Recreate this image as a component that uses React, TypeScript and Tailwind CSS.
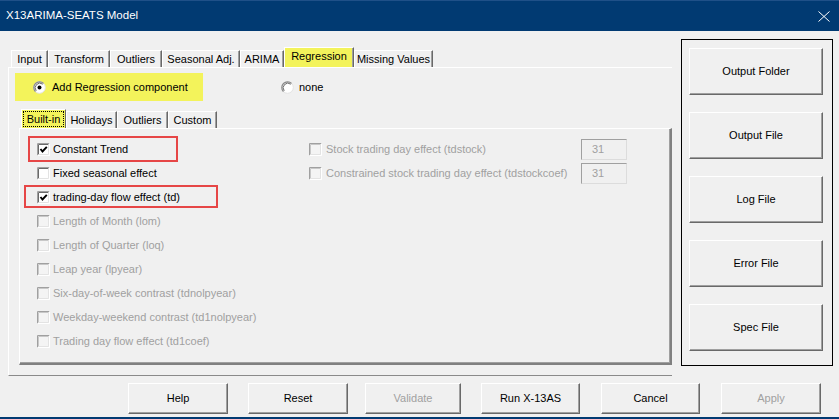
import React from 'react';

const font = { fontFamily: '"Liberation Sans", Arial, sans-serif' };

const outerTabs = [
  { label: 'Input', w: 'w-[37px]' },
  { label: 'Transform', w: 'w-[62px]' },
  { label: 'Outliers', w: 'w-[52px]' },
  { label: 'Seasonal Adj.', w: 'w-[78px]' },
  { label: 'ARIMA', w: 'w-[44px]' },
  { label: 'Regression', w: 'w-[70px]', active: true },
  { label: 'Missing Values', w: 'w-[79px]' },
];

const innerTabs = [
  { label: 'Built-in', w: 'w-[45px]', active: true },
  { label: 'Holidays', w: 'w-[51px]' },
  { label: 'Outliers', w: 'w-[51px]' },
  { label: 'Custom', w: 'w-[49px]' },
];

const leftChecks = [
  { label: 'Constant Trend', checked: true },
  { label: 'Fixed seasonal effect' },
  { label: 'trading-day flow effect (td)', checked: true },
  { label: 'Length of Month (lom)', disabled: true },
  { label: 'Length of Quarter (loq)', disabled: true },
  { label: 'Leap year (lpyear)', disabled: true },
  { label: 'Six-day-of-week contrast (tdnolpyear)', disabled: true },
  { label: 'Weekday-weekend contrast (td1nolpyear)', disabled: true },
  { label: 'Trading day flow effect (td1coef)', disabled: true },
];

const rightChecks = [
  'Stock trading day effect (tdstock)',
  'Constrained stock trading day effect (tdstockcoef)',
];

const sideButtons = ['Output Folder', 'Output File', 'Log File', 'Error File', 'Spec File'];

// bottom row: label, width, left margin, disabled
const bottomButtons = [
  { label: 'Help', w: 'w-[100px]', ml: 'ml-[128px]' },
  { label: 'Reset', w: 'w-[100px]', ml: 'ml-[20px]' },
  { label: 'Validate', w: 'w-[96px]', ml: 'ml-[17px]', disabled: true },
  { label: 'Run X-13AS', w: 'w-[99px]', ml: 'ml-[20px]' },
  { label: 'Cancel', w: 'w-[99px]', ml: 'ml-[21px]' },
  { label: 'Apply', w: 'w-[100px]', ml: 'ml-[21px]', disabled: true },
];

function CheckBox({ checked, disabled }: { checked?: boolean; disabled?: boolean }) {
  return (
    <svg width="13" height="13" viewBox="0 0 13 13" className="shrink-0">
      <rect x="0" y="0" width="13" height="13" fill={disabled ? '#f4f4f4' : '#ffffff'} />
      <path d="M0.5 12.5V0.5H12.5" fill="none" stroke="#a0a0a0" />
      <path d="M1.5 11.5V1.5H11.5" fill="none" stroke={disabled ? '#c8c8c8' : '#696969'} />
      <path d="M0.5 12.5H12.5V0.5" fill="none" stroke="#ffffff" />
      <path d="M1.5 11.5H11.5V1.5" fill="none" stroke="#e3e3e3" />
      {checked && (
        <polyline points="3.5,6 5.5,8.5 9.8,3.8" fill="none" stroke="#000" strokeWidth="1.9" />
      )}
    </svg>
  );
}

function Radio({ checked }: { checked?: boolean }) {
  return (
    <svg width="13" height="13" viewBox="0 0 13 13" className="shrink-0">
      <circle cx="6.5" cy="6.5" r="5.8" fill="#ffffff" stroke="#e3e3e3" />
      <path d="M2.4 10.6A5.8 5.8 0 0 1 10.6 2.4" fill="none" stroke="#8a8a8a" strokeWidth="1.2" />
      <path d="M3.2 9.8A4.7 4.7 0 0 1 9.8 3.2" fill="none" stroke="#5a5a5a" strokeWidth="0.9" />
      {checked && <circle cx="6.5" cy="6.5" r="2" fill="#000" />}
    </svg>
  );
}

function Button3D({ label, className, disabled }: { label: string; className: string; disabled?: boolean }) {
  return (
    <div
      className={`${className} flex items-center justify-center bg-[#f0f0f0] border border-t-white border-l-white border-r-[#696969] border-b-[#696969] shadow-[inset_-1px_-1px_0_#a0a0a0] text-[11px] ${
        disabled ? 'text-[#a0a0a0]' : 'text-black'
      }`}
    >
      {label}
    </div>
  );
}

export default function App() {
  return (
    <div className="w-[839px] h-[419px] bg-[#f0f0f0] flex flex-col overflow-hidden select-none" style={font}>
      {/* Title bar */}
      <div className="h-[31px] shrink-0 bg-[#013a72] border-t border-t-[#1f5088] flex items-center justify-between pl-[6px] pr-[9px]">
        <span className="text-white text-[11.5px]">X13ARIMA-SEATS Model</span>
        <svg width="12" height="11" viewBox="0 0 12 11">
          <path d="M0.5 0.5L11.5 10.5M11.5 0.5L0.5 10.5" stroke="#ffffff" strokeWidth="1" fill="none" />
        </svg>
      </div>

      {/* Main area */}
      <div className="h-[345px] shrink-0 flex">
        {/* Left: multipage */}
        <div className="ml-[8px] mt-[16px] w-[664px] flex flex-col">
          <div className="h-[20px] flex items-end pl-[3px]">
            {outerTabs.map((t) => (
              <div
                key={t.label}
                className={`${t.w} ${
                  t.active ? 'h-[20px] bg-[#f3f35b] pb-[2px]' : 'h-[17px] bg-[#f0f0f0]'
                } flex items-center justify-center border-t border-l border-t-white border-l-white border-r border-r-[#696969] shadow-[inset_-1px_0_0_#a0a0a0] text-[11px] text-black whitespace-nowrap`}
              >
                {t.label}
              </div>
            ))}
          </div>

          <div className="h-[309px] border-t border-t-white border-l border-l-white border-b border-b-[#8a8a8a] flex flex-col">
            {/* option row */}
            <div className="mt-[5px] flex items-center">
              <div className="ml-[6px] w-[188px] h-[28px] bg-[#f3f35b] flex items-center pl-[18px] gap-[6px] text-[11px] text-black">
                <Radio checked />
                <span>Add Regression component</span>
              </div>
              <div className="ml-[78px] flex items-center gap-[5px] text-[11px] text-black">
                <Radio />
                <span>none</span>
              </div>
            </div>

            {/* inner multipage */}
            <div className="ml-[10px] mt-[8px] flex flex-col">
              <div className="h-[19px] flex items-end pl-[2px]">
                {innerTabs.map((t) =>
                  t.active ? (
                    <div
                      key={t.label}
                      className={`${t.w} h-[19px] bg-[#f3f35b] border-t border-l border-t-white border-l-white border-r border-r-[#696969] p-[1px]`}
                    >
                      <div className="w-full h-full border border-dotted border-black flex items-center justify-center text-[11px] text-black">
                        {t.label}
                      </div>
                    </div>
                  ) : (
                    <div
                      key={t.label}
                      className={`${t.w} h-[17px] flex items-center justify-center border-t border-l border-t-white border-l-white border-r border-r-[#696969] shadow-[inset_-1px_0_0_#a0a0a0] text-[11px] text-black`}
                    >
                      {t.label}
                    </div>
                  )
                )}
              </div>

              <div className="relative h-[237px] border-t border-t-white border-l border-l-white border-r-2 border-r-[#808080] border-b-2 border-b-[#808080] shadow-[inset_-1px_-1px_0_#a0a0a0] flex pt-[8px]">
                <div className="w-[289px] pl-[17px] flex flex-col">
                  {leftChecks.map((c) => (
                    <div key={c.label} className="h-[24px] flex items-center gap-[3px]">
                      <CheckBox checked={c.checked} disabled={c.disabled} />
                      <span className={`text-[11px] whitespace-nowrap ${c.disabled ? 'text-[#a0a0a0]' : 'text-black'}`}>
                        {c.label}
                      </span>
                    </div>
                  ))}
                </div>
                <div className="flex flex-col">
                  {rightChecks.map((label) => (
                    <div key={label} className="h-[24px] flex items-center">
                      <div className="w-[272px] flex items-center gap-[4px]">
                        <CheckBox disabled />
                        <span className="text-[11px] text-[#a0a0a0] whitespace-nowrap">{label}</span>
                      </div>
                      <div className="w-[46px] h-[21px] border border-t-[#a0a0a0] border-l-[#a0a0a0] border-b-[#dcdcdc] border-r-[#dcdcdc] flex items-center pl-[10px] text-[11px] text-[#a0a0a0]">
                        31
                      </div>
                    </div>
                  ))}
                </div>

                {/* red annotation boxes */}
                <div className="absolute left-[8px] top-[7px] w-[150px] h-[26px] border-2 border-[#e64646] pointer-events-none" />
                <div className="absolute left-[4px] top-[56px] w-[194px] h-[23px] border-2 border-[#e64646] pointer-events-none" />
              </div>
            </div>
          </div>
        </div>

        {/* Right: file buttons frame */}
        <div className="ml-[9px] mt-[8px] w-[152px] h-[327px] border border-black pl-[7px] pt-[8px] flex flex-col gap-[17px]">
          {sideButtons.map((b) => (
            <Button3D key={b} label={b} className="w-[134px] h-[47px]" />
          ))}
        </div>
      </div>

      {/* Bottom buttons */}
      <div className="mt-[7px] h-[31px] shrink-0 flex">
        {bottomButtons.map((b) => (
          <Button3D key={b.label} label={b.label} className={`${b.w} ${b.ml} h-[31px]`} disabled={b.disabled} />
        ))}
      </div>

      <div className="mt-[3px] h-[2px] shrink-0 bg-[#013a72]" />
    </div>
  );
}
